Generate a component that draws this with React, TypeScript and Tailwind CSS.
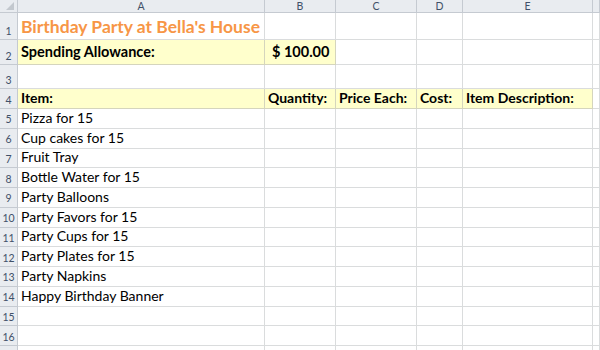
import React from 'react';

const cols = 'grid grid-cols-[18px_247px_71px_81px_46px_130px_1fr]';
const font = { fontFamily: 'Lato, "Open Sans", sans-serif' };

const items = [
  'Pizza for 15',
  'Cup cakes for 15',
  'Fruit Tray',
  'Bottle Water for 15',
  'Party Balloons',
  'Party Favors for 15',
  'Party Cups for 15',
  'Party Plates for 15',
  'Party Napkins',
  'Happy Birthday Banner',
];

function Cell({
  children,
  fill,
  className = '',
}: {
  children?: React.ReactNode;
  fill?: boolean;
  className?: string;
}) {
  return (
    <div
      className={`flex items-end overflow-visible whitespace-nowrap border-r border-b pl-[3px] ${
        fill ? 'bg-[#ffffcc] border-[#d5d5bd]' : 'bg-white border-[#dadcdd]'
      } ${className}`}
    >
      {children}
    </div>
  );
}

function RowHead({ n }: { n?: number }) {
  return (
    <div className="flex items-end justify-center border-r border-b border-[#c5cad1] bg-[#e9ecf0] pb-[3px] text-[10.5px] leading-none text-[#3f5068]">
      {n}
    </div>
  );
}

function Row({
  n,
  h,
  children,
}: {
  n?: number;
  h: string;
  children: React.ReactNode;
}) {
  return (
    <div className={`${cols} ${h}`}>
      <RowHead n={n} />
      {children}
    </div>
  );
}

export default function App() {
  return (
    <div className="h-[350px] w-[600px] overflow-hidden bg-white text-black" style={font}>
      {/* column letters */}
      <div className={`${cols} h-[13px] bg-[#e9ecf0] text-[10.5px] leading-none text-[#3f5068]`}>
        <div className="relative border-r border-b border-[#c5cad1]">
          <svg className="absolute right-[3px] bottom-[2px]" width="8" height="8" viewBox="0 0 8 8">
            <polygon points="8,0 8,8 0,8" fill="#c3c8ce" />
          </svg>
        </div>
        {['A', 'B', 'C', 'D', 'E', ''].map((c, i) => (
          <div
            key={i}
            className="flex items-center justify-center border-r border-b border-[#c5cad1]"
          >
            {c}
          </div>
        ))}
      </div>

      <Row n={1} h="h-[27px]">
        <Cell className="pb-[4px] text-[17.5px] leading-none font-bold text-[#f79646]">
          Birthday Party at Bella's House
        </Cell>
        <Cell />
        <Cell />
        <Cell />
        <Cell />
        <Cell />
      </Row>

      <Row n={2} h="h-[25px]">
        <Cell fill className="pb-[5px] text-[14.5px] leading-none font-bold">
          Spending Allowance:
        </Cell>
        <Cell fill className="pb-[5px] pl-[7px] text-[14.5px] leading-none font-bold">
          $ 100.00
        </Cell>
        <Cell />
        <Cell />
        <Cell />
        <Cell />
      </Row>

      <Row n={3} h="h-[24px]">
        <Cell />
        <Cell />
        <Cell />
        <Cell />
        <Cell />
        <Cell />
      </Row>

      <Row n={4} h="h-[20px]">
        {['Item:', 'Quantity:', 'Price Each:', 'Cost:', 'Item Description:'].map((t) => (
          <Cell key={t} fill className="pb-[3px] text-[14px] leading-none font-bold">
            {t}
          </Cell>
        ))}
        <Cell />
      </Row>

      {Array.from({ length: 13 }).map((_, i) => (
        <Row key={i} n={i < 12 ? i + 5 : undefined} h="h-[19.75px]">
          <Cell className="pb-[3px] text-[14px] leading-none">{items[i] ?? ''}</Cell>
          <Cell />
          <Cell />
          <Cell />
          <Cell />
          <Cell />
        </Row>
      ))}
    </div>
  );
}
